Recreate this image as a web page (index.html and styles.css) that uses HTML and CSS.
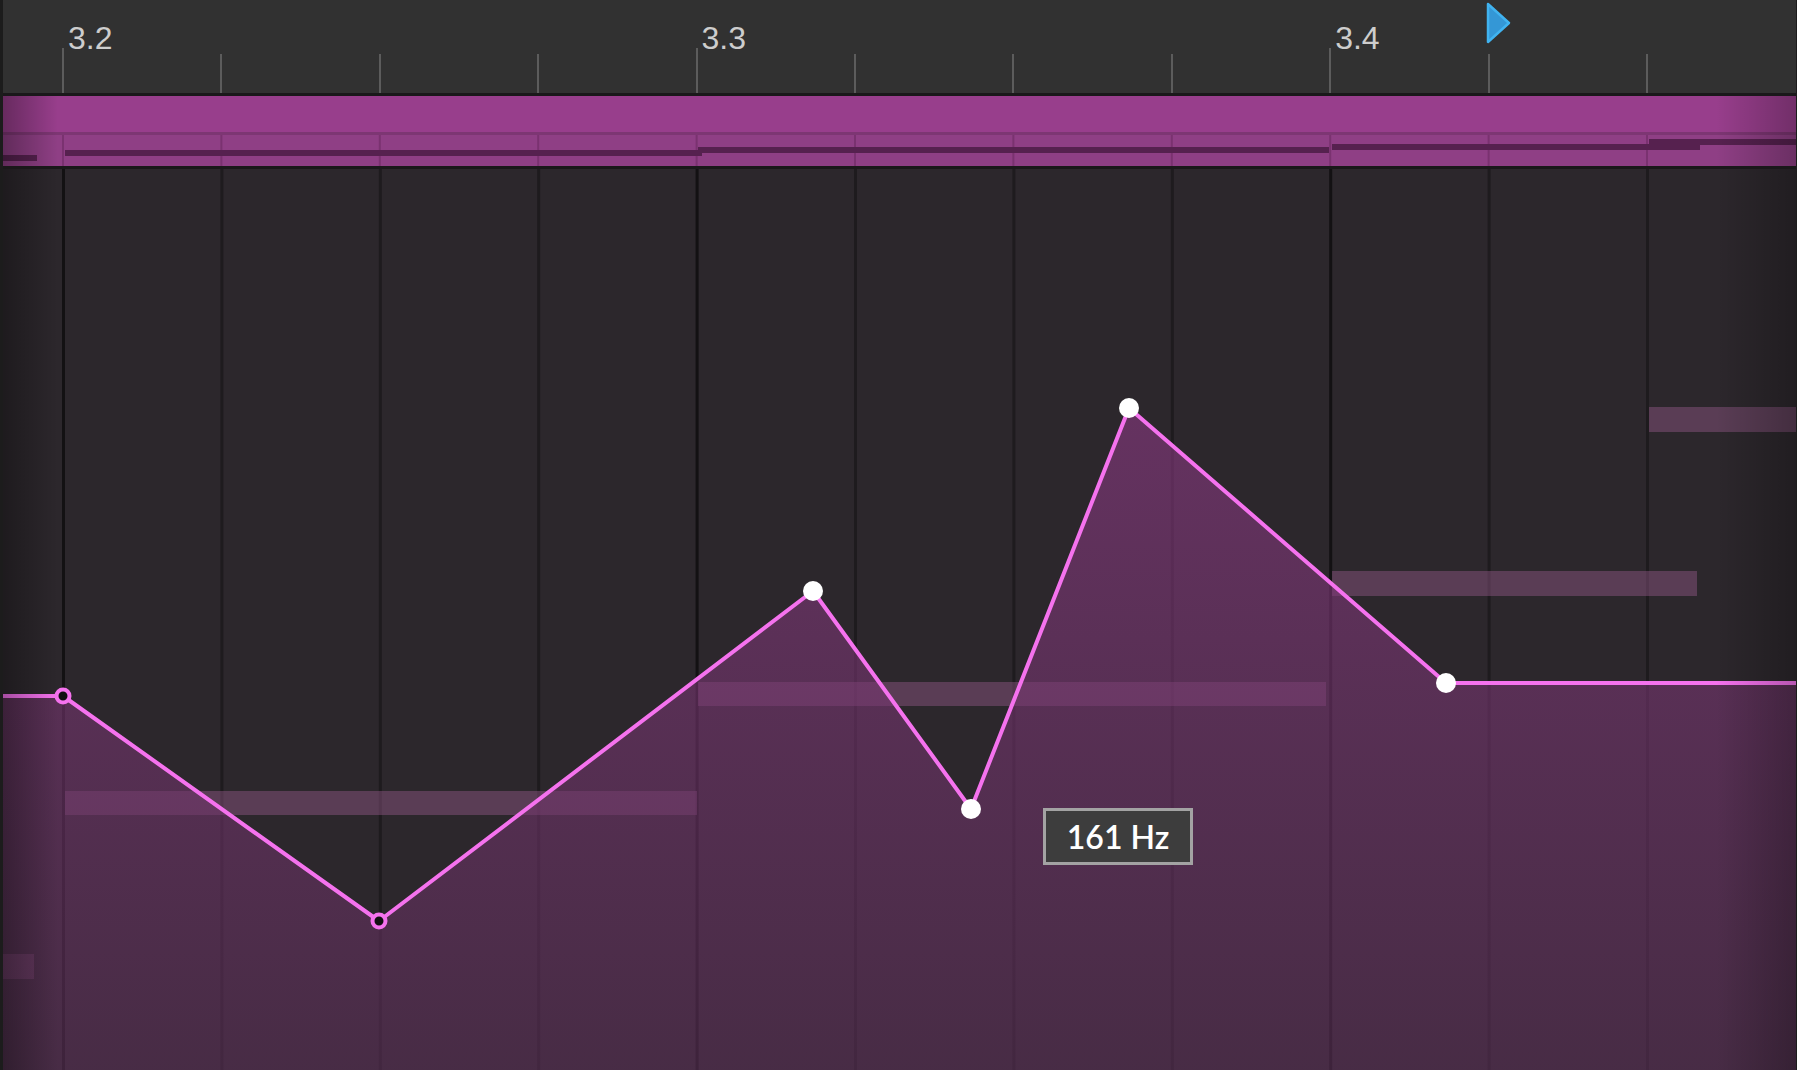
FILE: index.html
```html
<!DOCTYPE html>
<html lang="en">
<head>
    <meta charset="UTF-8">
    <meta name="viewport" content="width=device-width, initial-scale=1.0">
    <title>Automation Lane</title>
    <link rel="stylesheet" href="styles.css">
</head>
<body>
    <div class="app">
        <!-- time ruler -->
        <div class="ruler">
            <div class="beat major"><span class="tick"></span><span class="label">3.2</span></div>
            <div class="beat"><span class="tick"></span></div>
            <div class="beat"><span class="tick"></span></div>
            <div class="beat"><span class="tick"></span></div>
            <div class="beat major"><span class="tick"></span><span class="label">3.3</span></div>
            <div class="beat"><span class="tick"></span></div>
            <div class="beat"><span class="tick"></span></div>
            <div class="beat"><span class="tick"></span></div>
            <div class="beat major"><span class="tick"></span><span class="label">3.4</span></div>
            <div class="beat"><span class="tick"></span></div>
            <div class="beat"><span class="tick"></span></div>

            <svg class="playhead" viewBox="0 0 26 42" width="26" height="42">
                <polygon points="2,2 23,21 2,40" />
            </svg>
        </div>

        <!-- clip overview -->
        <div class="clip">
            <div class="clip-head"></div>
            <div class="clip-body">
                <svg class="mini" viewBox="3 135 1793 31" preserveAspectRatio="none">
                    <rect class="mini-grid" x="62" y="135" width="2" height="31" />
                    <rect class="mini-grid" x="220.4" y="135" width="2" height="31" />
                    <rect class="mini-grid" x="378.8" y="135" width="2" height="31" />
                    <rect class="mini-grid" x="537.2" y="135" width="2" height="31" />
                    <rect class="mini-grid" x="695.6" y="135" width="2" height="31" />
                    <rect class="mini-grid" x="854" y="135" width="2" height="31" />
                    <rect class="mini-grid" x="1012.4" y="135" width="2" height="31" />
                    <rect class="mini-grid" x="1170.8" y="135" width="2" height="31" />
                    <rect class="mini-grid" x="1329.2" y="135" width="2" height="31" />
                    <rect class="mini-grid" x="1487.6" y="135" width="2" height="31" />
                    <rect class="mini-grid" x="1646" y="135" width="2" height="31" />

                    <rect class="mini-note" x="3" y="155" width="34" height="6" />
                    <rect class="mini-note" x="65" y="150" width="637" height="6" />
                    <rect class="mini-note" x="698" y="147" width="631" height="6" />
                    <rect class="mini-note" x="1332" y="144" width="368" height="6" />
                    <rect class="mini-note" x="1649" y="139" width="148" height="6" />
                </svg>
            </div>
        </div>

        <!-- automation editor -->
        <div class="editor">
            <svg class="canvas" viewBox="3 169 1793 901" preserveAspectRatio="none">
                <defs>
                    <linearGradient id="area-fill" x1="0" y1="400" x2="0" y2="1070" gradientUnits="userSpaceOnUse">
                        <stop offset="0" stop-color="#8c3a84" stop-opacity="0.6" />
                        <stop offset="1" stop-color="#5a2f56" stop-opacity="0.6" />
                    </linearGradient>
                </defs>

                <rect class="grid major" x="62" y="169" width="3" height="901" />
                <rect class="grid" x="220.4" y="169" width="3" height="901" />
                <rect class="grid" x="378.8" y="169" width="3" height="901" />
                <rect class="grid" x="537.2" y="169" width="3" height="901" />
                <rect class="grid major" x="695.6" y="169" width="3" height="901" />
                <rect class="grid" x="854" y="169" width="3" height="901" />
                <rect class="grid" x="1012.4" y="169" width="3" height="901" />
                <rect class="grid" x="1170.8" y="169" width="3" height="901" />
                <rect class="grid major" x="1329.2" y="169" width="3" height="901" />
                <rect class="grid" x="1487.6" y="169" width="3" height="901" />
                <rect class="grid" x="1646" y="169" width="3" height="901" />

                <rect class="note" x="3" y="954" width="31" height="25" />
                <rect class="note" x="65" y="791" width="632" height="24" />
                <rect class="note" x="698" y="682" width="628" height="24" />
                <rect class="note" x="1332" y="571" width="365" height="25" />
                <rect class="note" x="1649" y="407" width="148" height="25" />

                <polygon class="area" points="3,696 63,696 379,921 813,591 971,809 1129,408 1446,683 1797,683 1797,1070 3,1070" />
                <polyline class="curve" points="3,696 63,696 379,921 813,591 971,809 1129,408 1446,683 1797,683" />

                <circle class="point hollow" cx="63" cy="696" r="6.5" />
                <circle class="point hollow" cx="379" cy="921" r="6.5" />
                <circle class="point" cx="813" cy="591" r="10" />
                <circle class="point" cx="971" cy="809" r="10" />
                <circle class="point" cx="1129" cy="408" r="10" />
                <circle class="point" cx="1446" cy="683" r="10" />
            </svg>

            <div class="tooltip">161 Hz</div>
        </div>
    </div>
</body>
</html>
```

FILE: styles.css
```css
* {
    box-sizing: border-box;
}

body {
    margin: 0;
    width: 1797px;
    height: 1070px;
    overflow: hidden;
    background: #1c1c1c;
    font-family: 'Liberation Sans', Arial, sans-serif;
}

.app {
    display: flex;
    flex-direction: column;
    height: 100%;
    padding: 0 1px 0 3px;
}

/* Ruler */
.ruler {
    position: relative;
    display: flex;
    height: 96px;
    padding-left: 59px;
    background: #313131;
    border-bottom: 3px solid #1a181a;
}

.beat {
    display: flex;
    align-items: flex-end;
    width: 158.4px;
    flex: none;
}

.tick {
    width: 2px;
    height: 39px;
    background: #5c5c5c;
}

.beat.major .tick {
    height: 45px;
}

.label {
    align-self: flex-start;
    margin: 22px 0 0 4px;
    font-size: 32px;
    line-height: 32px;
    color: #cdcdcd;
}

.playhead {
    position: absolute;
    left: 1483px;
    top: 2px;
}

.playhead polygon {
    fill: #3497d6;
    stroke: #40b3f0;
    stroke-width: 2.5;
    stroke-linejoin: round;
}

/* Clip overview band */
.clip {
    position: relative;
    border-bottom: 3px solid #1a181a;
}

.clip-head {
    height: 39px;
    background: #983e8c;
    border-bottom: 3px solid #7d3673;
}

.clip-body {
    height: 31px;
    background: #8f3f85;
}

.mini {
    display: block;
    width: 100%;
    height: 100%;
}

.mini-grid {
    fill: #7a3270;
}

.mini-note {
    fill: #56214f;
}

.clip::after,
.editor::after {
    content: '';
    position: absolute;
    inset: 0;
    pointer-events: none;
    background: linear-gradient(to right, rgba(0, 0, 0, 0.32) 0, rgba(0, 0, 0, 0) 55px, rgba(0, 0, 0, 0) calc(100% - 80px), rgba(0, 0, 0, 0.25) 100%);
}

/* Editor */
.editor {
    position: relative;
    flex: 1;
    background: #2c272c;
}

.canvas {
    display: block;
    width: 100%;
    height: 100%;
}

.grid {
    fill: #1e1b1e;
}

.grid.major {
    fill: #131113;
}

.note {
    fill: rgba(146, 88, 135, 0.45);
}

.area {
    fill: url(#area-fill);
}

.curve {
    fill: none;
    stroke: #f572ee;
    stroke-width: 4;
    stroke-linejoin: round;
}

.point {
    fill: #ffffff;
}

.point.hollow {
    fill: #121012;
    stroke: #f572ee;
    stroke-width: 4;
}

.tooltip {
    position: absolute;
    left: 1040px;
    top: 639px;
    width: 150px;
    height: 57px;
    background: #3d3d3d;
    border: 3px solid #a3a3a3;
    color: #ffffff;
    font-family: 'Lato', sans-serif;
    font-size: 32px;
    font-weight: 600;
    line-height: 51px;
    text-align: center;
    z-index: 1;
}
```
